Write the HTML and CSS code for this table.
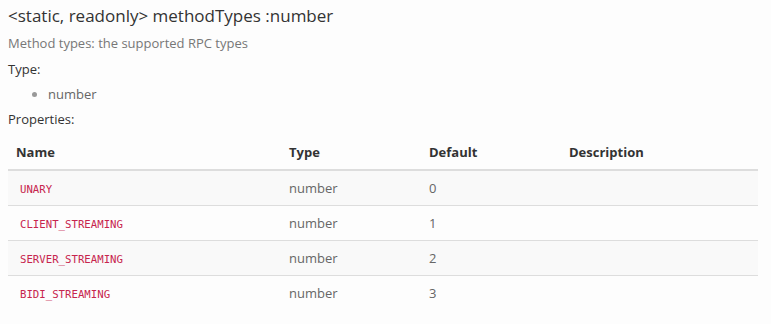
FILE: index.html
```html
<!DOCTYPE html>
<html lang="en">
<head>
    <meta charset="UTF-8">
    <title>methodTypes</title>
    <link rel="stylesheet" href="styles.css">
</head>
<body>
    <div class="member">
        <h4 class="name">&lt;static, readonly&gt; methodTypes :number</h4>
        <div class="description">Method types: the supported RPC types</div>

        <h5>Type:</h5>
        <ul class="type-list">
            <li><span class="param-type">number</span></li>
        </ul>

        <h5>Properties:</h5>
        <table class="props">
            <thead>
                <tr>
                    <th class="col-name">Name</th>
                    <th class="col-type">Type</th>
                    <th class="col-default">Default</th>
                    <th>Description</th>
                </tr>
            </thead>
            <tbody>
                <tr>
                    <td><code>UNARY</code></td>
                    <td class="type">number</td>
                    <td class="default">0</td>
                    <td></td>
                </tr>
                <tr>
                    <td><code>CLIENT_STREAMING</code></td>
                    <td class="type">number</td>
                    <td class="default">1</td>
                    <td></td>
                </tr>
                <tr>
                    <td><code>SERVER_STREAMING</code></td>
                    <td class="type">number</td>
                    <td class="default">2</td>
                    <td></td>
                </tr>
                <tr>
                    <td><code>BIDI_STREAMING</code></td>
                    <td class="type">number</td>
                    <td class="default">3</td>
                    <td></td>
                </tr>
            </tbody>
        </table>
    </div>
</body>
</html>
```

FILE: styles.css
```css
body {
    margin: 0;
    padding: 0 8px;
    background-color: #fdfdfd;
    font-family: "Open Sans", "Liberation Sans", sans-serif;
    font-size: 13px;
    color: #333;
}

.member {
    width: 750px;
}

.name {
    margin: 0;
    padding-top: 4px;
    font-size: 17px;
    font-weight: 400;
    line-height: 24px;
    color: #333;
}

.description {
    margin-top: 5px;
    color: #777;
    line-height: 20px;
}

h5 {
    margin: 6px 0 0;
    font-size: 13px;
    font-weight: 400;
    line-height: 20px;
}

.type-list {
    margin: 5px 0 0;
    padding-left: 40px;
    line-height: 20px;
}

.type-list + h5 {
    margin-top: 5px;
}

.type-list li::marker {
    color: #999;
}

.param-type {
    color: #666;
}

.props {
    width: 100%;
    margin-top: 6px;
    border-collapse: collapse;
}

.props th {
    text-align: left;
    font-weight: 700;
    padding: 8px;
    line-height: 18px;
    border-bottom: 2px solid #ddd;
}

.col-name {
    width: 257px;
}

.col-type,
.col-default {
    width: 124px;
}

.props td {
    padding: 8px;
    height: 18px;
    line-height: 18px;
    border-top: 1px solid #ddd;
    color: #666;
}

.props tbody tr:first-child td {
    border-top: 0;
}

.props tbody tr:nth-child(odd) {
    background-color: #f9f9f9;
}

code {
    font-family: "DejaVu Sans Mono", "Liberation Mono", monospace;
    font-size: 10.7px;
    line-height: 12px;
    color: #c7254e;
    padding: 2px 4px;
}
```
